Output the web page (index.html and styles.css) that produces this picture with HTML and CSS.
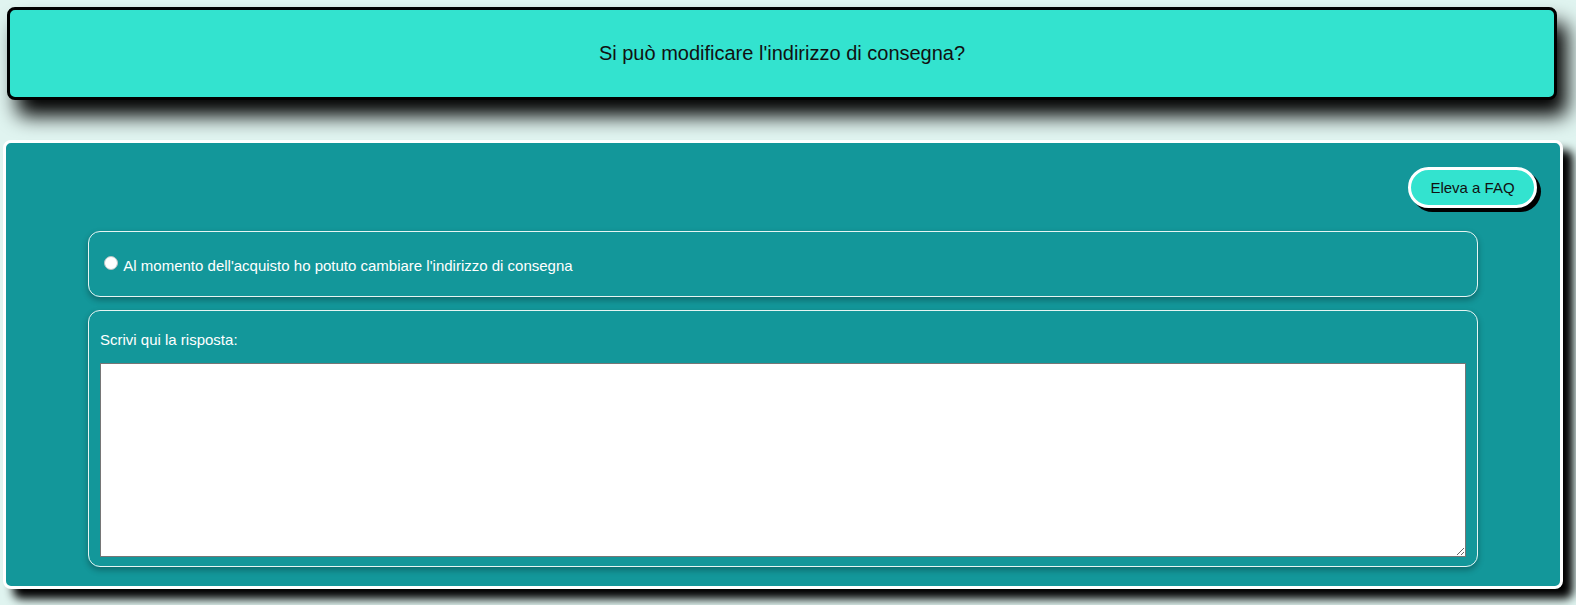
FILE: index.html
```html
<!DOCTYPE html>
<html lang="it">
<head>
<meta charset="utf-8">
<title>FAQ</title>
<link rel="stylesheet" href="styles.css">
</head>
<body>
<header class="question">
  <h1 class="question-title">Si può modificare l'indirizzo di consegna?</h1>
</header>
<main class="panel">
  <div class="toolbar">
    <button class="faq-btn" type="button">Eleva a FAQ</button>
  </div>
  <div class="card option-card">
    <label class="option"><input type="radio" name="ans"> Al momento dell'acquisto ho potuto cambiare l'indirizzo di consegna</label>
  </div>
  <div class="card answer-card">
    <label class="answer-label" for="risposta">Scrivi qui la risposta:</label>
    <textarea id="risposta" class="answer-box"></textarea>
  </div>
</main>
</body>
</html>
```
FILE: styles.css
```css
html, body {
  margin: 0;
  padding: 0;
}
body {
  background: #e0f4f0;
  font-family: "Liberation Sans", Arial, sans-serif;
  padding: 7px 13px 20px 3px;
  height: 605px;
  box-sizing: border-box;
  overflow: hidden;
}
.question {
  margin: 0 6px 0 4px;
  height: 93px;
  box-sizing: border-box;
  border: 3px solid #000;
  border-radius: 8px;
  background: #33e3cf;
  box-shadow: 10px 16px 20px #000;
  display: flex;
  align-items: center;
  justify-content: center;
}
.question-title {
  margin: 0;
  font-size: 20px;
  font-weight: normal;
  color: #111;
}
.panel {
  margin-top: 40px;
  height: 449px;
  box-sizing: border-box;
  border: 3px solid #fff;
  border-radius: 8px;
  background: #13979a;
  box-shadow: 10px 10px 10px #000;
  padding: 24px 23px 19px;
  display: flex;
  flex-direction: column;
}
.toolbar {
  display: flex;
  justify-content: flex-end;
  margin-bottom: 23px;
}
.faq-btn {
  width: 129px;
  height: 41px;
  box-sizing: border-box;
  border: 3px solid #fff;
  border-radius: 21px;
  background: #33e3cf;
  box-shadow: 4px 4px 0 #000;
  font-family: "Liberation Sans", Arial, sans-serif;
  font-size: 15px;
  color: #111;
  padding: 0;
  cursor: pointer;
}
.card {
  width: 1390px;
  box-sizing: border-box;
  margin: 0 auto;
  border: 1px solid #e6f5f3;
  border-radius: 12px;
  box-shadow: 0 3px 6px rgba(0, 0, 0, 0.3);
  color: #fff;
  font-size: 15px;
}
.option-card {
  height: 66px;
  padding: 0 10px;
  display: flex;
  align-items: center;
}
.option {
  line-height: 18px;
  padding-top: 2px;
}
.option input {
  -webkit-appearance: none;
  appearance: none;
  width: 14px;
  height: 14px;
  box-sizing: border-box;
  border: 1px solid #b8c4c4;
  border-radius: 50%;
  background: #fff;
  margin: 0 2px 0 5px;
  vertical-align: 1px;
}
.answer-card {
  margin-top: 13px;
  padding: 20px 11px 9px;
}
.answer-label {
  display: block;
  line-height: 17px;
  margin-bottom: 15px;
}
.answer-box {
  display: block;
  width: 100%;
  height: 194px;
  box-sizing: border-box;
  margin: 0;
  border: 1px solid #767676;
  background: #fff;
}
```
